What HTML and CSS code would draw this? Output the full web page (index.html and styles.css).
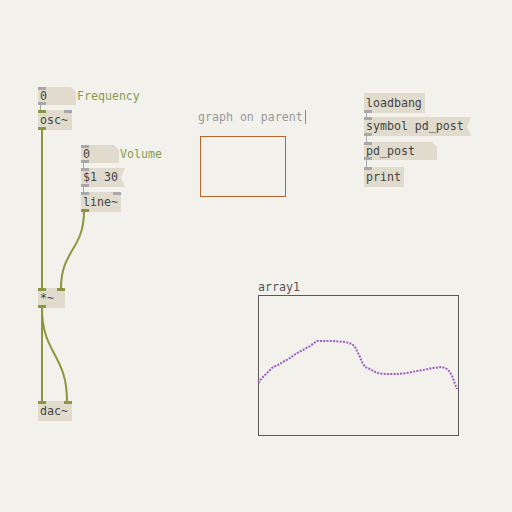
FILE: index.html
```html
<!DOCTYPE html>
<html>
<head>
<meta charset="utf-8">
<link rel="stylesheet" href="styles.css">
</head>
<body>
<div class="patch">
  <svg class="cords" width="512" height="512" viewBox="0 0 512 512">
    <g class="ctl">
      <line x1="40.5" y1="105" x2="40.5" y2="110"/>
      <line x1="83.5" y1="163" x2="83.5" y2="168"/>
      <line x1="83.5" y1="187" x2="83.5" y2="192"/>
      <line x1="366.5" y1="112" x2="366.5" y2="117"/>
      <line x1="366.5" y1="136" x2="366.5" y2="142"/>
      <line x1="366.5" y1="160" x2="366.5" y2="167"/>
    </g>
    <g class="sig">
      <line x1="42" y1="130" x2="42" y2="288"/>
      <path d="M84 211 C84 250 61 250 61 288"/>
      <line x1="42" y1="307" x2="42" y2="401"/>
      <path d="M42 308 C42 354 67 354 67 401"/>
    </g>
    <rect class="gop" x="200.5" y="136.5" width="85" height="60"/>
    <rect class="arr" x="258.5" y="295.5" width="200" height="140"/>
    <polyline class="curve" points="258.5,383 260,380 263,377 267,373 270,370 273,367 278,365 283,362 290,358 297,353 303,350 310,346 317,341 333,341 345,342 352,344 355,347 357,351 360,357 362,362 365,367 370,369 377,373 385,374 398,374 407,373 417,371 423,370 433,368 442,367 447,369 450,372 453,378 455,384 457,389"/>
  </svg>

  <div class="box atom" style="left:38px;top:87px;width:38px">0<span class="io in ctl-io"></span><span class="io out ctl-io"></span></div>
  <div class="label" style="left:77px;top:87px">Frequency</div>
  <div class="box obj" style="left:38px;top:110px;width:34px">osc~<span class="io in sig-io"></span><span class="io in r ctl-io"></span><span class="io out sig-io"></span></div>

  <div class="box atom" style="left:81px;top:145px;width:38px">0<span class="io in ctl-io"></span><span class="io out ctl-io"></span></div>
  <div class="label" style="left:120px;top:145px">Volume</div>
  <div class="box msg" style="left:81px;top:168px;width:44px">$1 30<span class="io in ctl-io"></span><span class="io out ctl-io"></span></div>
  <div class="box obj" style="left:81px;top:192px;width:40px">line~<span class="io in ctl-io"></span><span class="io in r ctl-io"></span><span class="io out sig-io"></span></div>

  <div class="box obj" style="left:38px;top:288px;width:27px">*~<span class="io in sig-io"></span><span class="io in r sig-io"></span><span class="io out sig-io"></span></div>
  <div class="box obj" style="left:38px;top:401px;width:34px">dac~<span class="io in sig-io"></span><span class="io in r sig-io"></span></div>

  <div class="comment" style="left:198px;top:108px">graph on parent<span class="cursor"></span></div>

  <div class="box obj" style="left:364px;top:93px;width:61px">loadbang<span class="io out ctl-io"></span></div>
  <div class="box msg" style="left:364px;top:117px;width:107px">symbol pd_post<span class="io in ctl-io"></span><span class="io out ctl-io"></span></div>
  <div class="box atom" style="left:364px;top:142px;width:73px">pd_post<span class="io in ctl-io"></span><span class="io out ctl-io"></span></div>
  <div class="box obj" style="left:364px;top:167px;width:40px">print<span class="io in ctl-io"></span></div>

  <div class="arrlabel" style="left:258px;top:278px">array1</div>
</div>
</body>
</html>
```

FILE: styles.css
```css
html, body {
  margin: 0;
  padding: 0;
  background: #f2f1ec;
}
.patch {
  position: relative;
  width: 512px;
  height: 512px;
  background: #f2f1ec;
  font-family: "DejaVu Sans Mono", monospace;
  font-size: 11.6px;
  color: #444;
  overflow: hidden;
}
.cords {
  position: absolute;
  left: 0;
  top: 0;
}
.ctl line {
  stroke: #a8a8a8;
  stroke-width: 1;
}
.sig line, .sig path {
  stroke: #8b963f;
  stroke-width: 2;
  fill: none;
}
.gop {
  fill: none;
  stroke: #b8652c;
  stroke-width: 1;
}
.arr {
  fill: none;
  stroke: #5a5a5a;
  stroke-width: 1;
}
.curve {
  fill: none;
  stroke: #9c5cc2;
  stroke-width: 2;
  stroke-dasharray: 2 1.3;
}
.box {
  position: absolute;
  box-sizing: border-box;
  background: #e0dbcd;
  padding-left: 2px;
  white-space: pre;
  z-index: 1;
}
.obj {
  height: 20px;
  line-height: 20px;
}
.atom {
  height: 18px;
  line-height: 18px;
  clip-path: polygon(0 0, calc(100% - 5px) 0, 100% 5px, 100% 100%, 0 100%);
}
.msg {
  height: 19px;
  line-height: 19px;
  clip-path: polygon(0 0, 100% 0, calc(100% - 4px) 50%, 100% 100%, 0 100%);
}
.io {
  position: absolute;
  width: 8px;
  height: 3px;
  left: 0;
}
.io.in { top: 0; }
.io.out { bottom: 0; }
.io.r { left: auto; right: 0; }
.ctl-io { background: #a8a8a8; }
.sig-io { background: #8b963f; }
.label {
  position: absolute;
  height: 18px;
  line-height: 18px;
  color: #8a9a4c;
  white-space: pre;
}
.comment {
  position: absolute;
  color: #9a9a9a;
  line-height: 18px;
  white-space: pre;
}
.cursor {
  display: inline-block;
  width: 1px;
  height: 14px;
  background: #888;
  vertical-align: -3px;
  margin-left: 2px;
}
.arrlabel {
  position: absolute;
  color: #555;
  line-height: 18px;
  white-space: pre;
}
```
